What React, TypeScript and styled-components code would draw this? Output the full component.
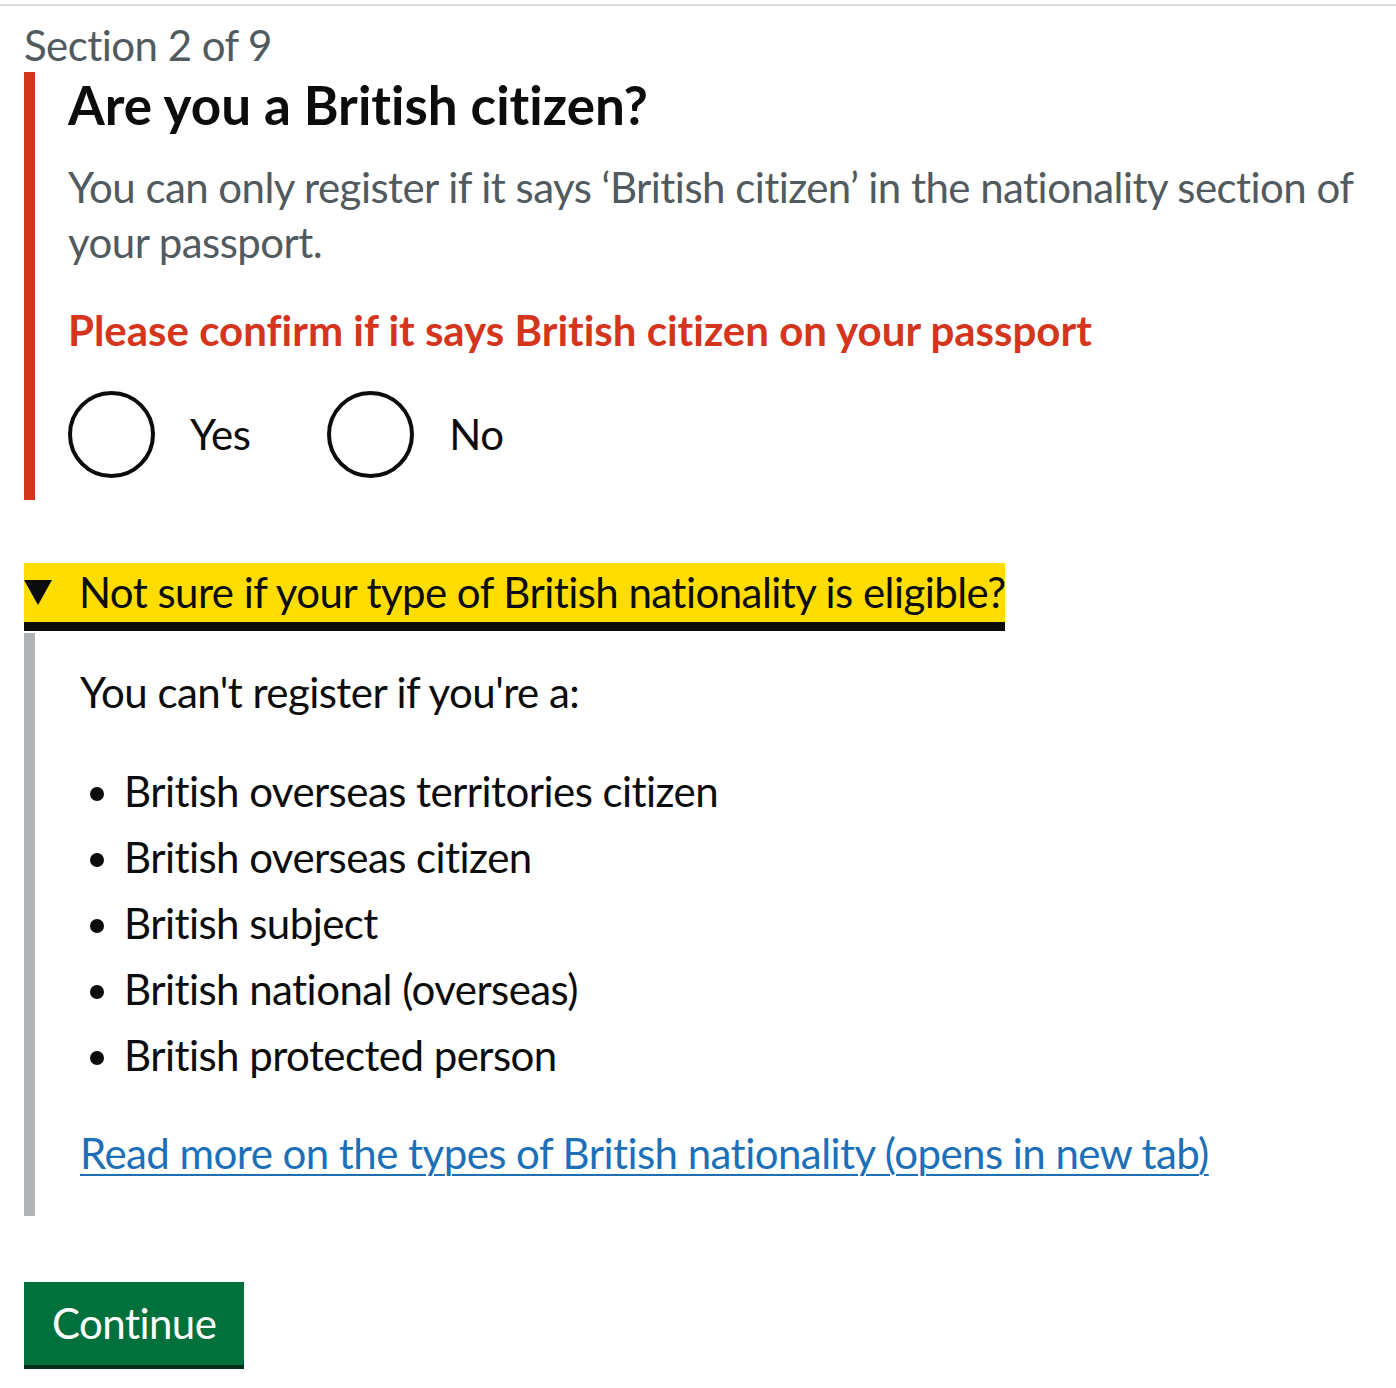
import * as React from "react";
import styled, { createGlobalStyle } from "styled-components";

const GlobalStyle = createGlobalStyle`
  body {
    margin: 0;
    background: #ffffff;
    color: #0b0c0c;
    font-family: Lato, "Noto Sans", Arial, sans-serif;
    font-variant-ligatures: none;
    letter-spacing: -0.55px;
  }
`;

const Page = styled.div`
  padding-top: 4px;
`;

const TopRule = styled.div`
  height: 2px;
  background: #dedede;
`;

const Main = styled.main`
  padding: 14px 24px 20px;
`;

const Caption = styled.span`
  display: block;
  font-size: 42px;
  line-height: 50px;
  color: #505a5f;
  margin-bottom: 2px;
`;

const FormGroup = styled.div<{ $error?: boolean }>`
  border-left: 11px solid ${(p) => (p.$error ? "#d4351c" : "transparent")};
  padding: 0 0 22px 33px;
`;

const Heading = styled.h1`
  margin: 0 0 22px;
  font-size: 53px;
  line-height: 66px;
  font-weight: 700;
  letter-spacing: 0;
`;

const Hint = styled.p`
  margin: 0 0 33px;
  font-size: 42px;
  line-height: 55px;
  color: #505a5f;
`;

const ErrorMessage = styled.p`
  margin: 0 0 33px;
  font-size: 42px;
  line-height: 55px;
  font-weight: 700;
  letter-spacing: 0;
  color: #d4351c;
`;

const RadioRow = styled.div`
  display: flex;
  gap: 44px;
`;

const RadioItem = styled.label`
  display: flex;
  align-items: center;
  cursor: pointer;
`;

const RadioCircle = styled.span`
  width: 87px;
  height: 87px;
  box-sizing: border-box;
  border: 4.4px solid #0b0c0c;
  border-radius: 50%;
  flex-shrink: 0;
`;

const RadioLabel = styled.span`
  font-size: 42px;
  line-height: 55px;
  padding: 0 33px 0 35px;
`;

const Details = styled.details`
  margin-top: 63px;
`;

const Summary = styled.summary`
  display: inline-flex;
  align-items: center;
  list-style: none;
  background: #ffdd00;
  border-bottom: 9px solid #0b0c0c;
  font-size: 42px;
  line-height: 59px;
  cursor: pointer;
  &::-webkit-details-marker {
    display: none;
  }
`;

const Triangle = styled.span`
  width: 0;
  height: 0;
  border-left: 14px solid transparent;
  border-right: 14px solid transparent;
  border-top: 25px solid #0b0c0c;
  margin-right: 27px;
`;

const DetailsText = styled.div`
  margin-top: 2px;
  border-left: 11px solid #b1b4b6;
  padding: 32px 0 35px 45px;
`;

const Body = styled.p`
  margin: 0 0 44px;
  font-size: 42px;
  line-height: 55px;
`;

const List = styled.ul`
  margin: 0 0 43px;
  padding-left: 44px;
  font-size: 42px;
  line-height: 55px;
`;

const ListItem = styled.li`
  margin-bottom: 11px;
`;

const Link = styled.a`
  font-size: 42px;
  line-height: 55px;
  color: #1d70b8;
  text-decoration: underline;
  text-decoration-thickness: 2px;
  text-underline-offset: 5px;
`;

const Button = styled.button`
  margin-top: 66px;
  font-family: inherit;
  font-size: 42px;
  line-height: 42px;
  letter-spacing: -0.55px;
  color: #ffffff;
  background: #00703c;
  border: 0;
  border-radius: 0;
  padding: 20px 28px 21px;
  box-shadow: 0 4px 0 #002d18;
  cursor: pointer;
`;

const ineligible = [
  "British overseas territories citizen",
  "British overseas citizen",
  "British subject",
  "British national (overseas)",
  "British protected person",
];

const App: React.FC = () => {
  return (
    <Page>
      <GlobalStyle />
      <TopRule />
      <Main>
        <Caption>Section 2 of 9</Caption>
        <FormGroup $error>
          <Heading>Are you a British citizen?</Heading>
          <Hint>
            You can only register if it says ‘British citizen’ in the
            nationality section of your passport.
          </Hint>
          <ErrorMessage>
            Please confirm if it says British citizen on your passport
          </ErrorMessage>
          <RadioRow>
            <RadioItem>
              <RadioCircle />
              <RadioLabel>Yes</RadioLabel>
            </RadioItem>
            <RadioItem>
              <RadioCircle />
              <RadioLabel>No</RadioLabel>
            </RadioItem>
          </RadioRow>
        </FormGroup>
        <Details open>
          <Summary>
            <Triangle />
            Not sure if your type of British nationality is eligible?
          </Summary>
          <DetailsText>
            <Body>You can't register if you're a:</Body>
            <List>
              {ineligible.map((item) => (
                <ListItem key={item}>{item}</ListItem>
              ))}
            </List>
            <Link href="#" target="_blank">
              Read more on the types of British nationality (opens in new tab)
            </Link>
          </DetailsText>
        </Details>
        <Button type="button">Continue</Button>
      </Main>
    </Page>
  );
};

export default App;
